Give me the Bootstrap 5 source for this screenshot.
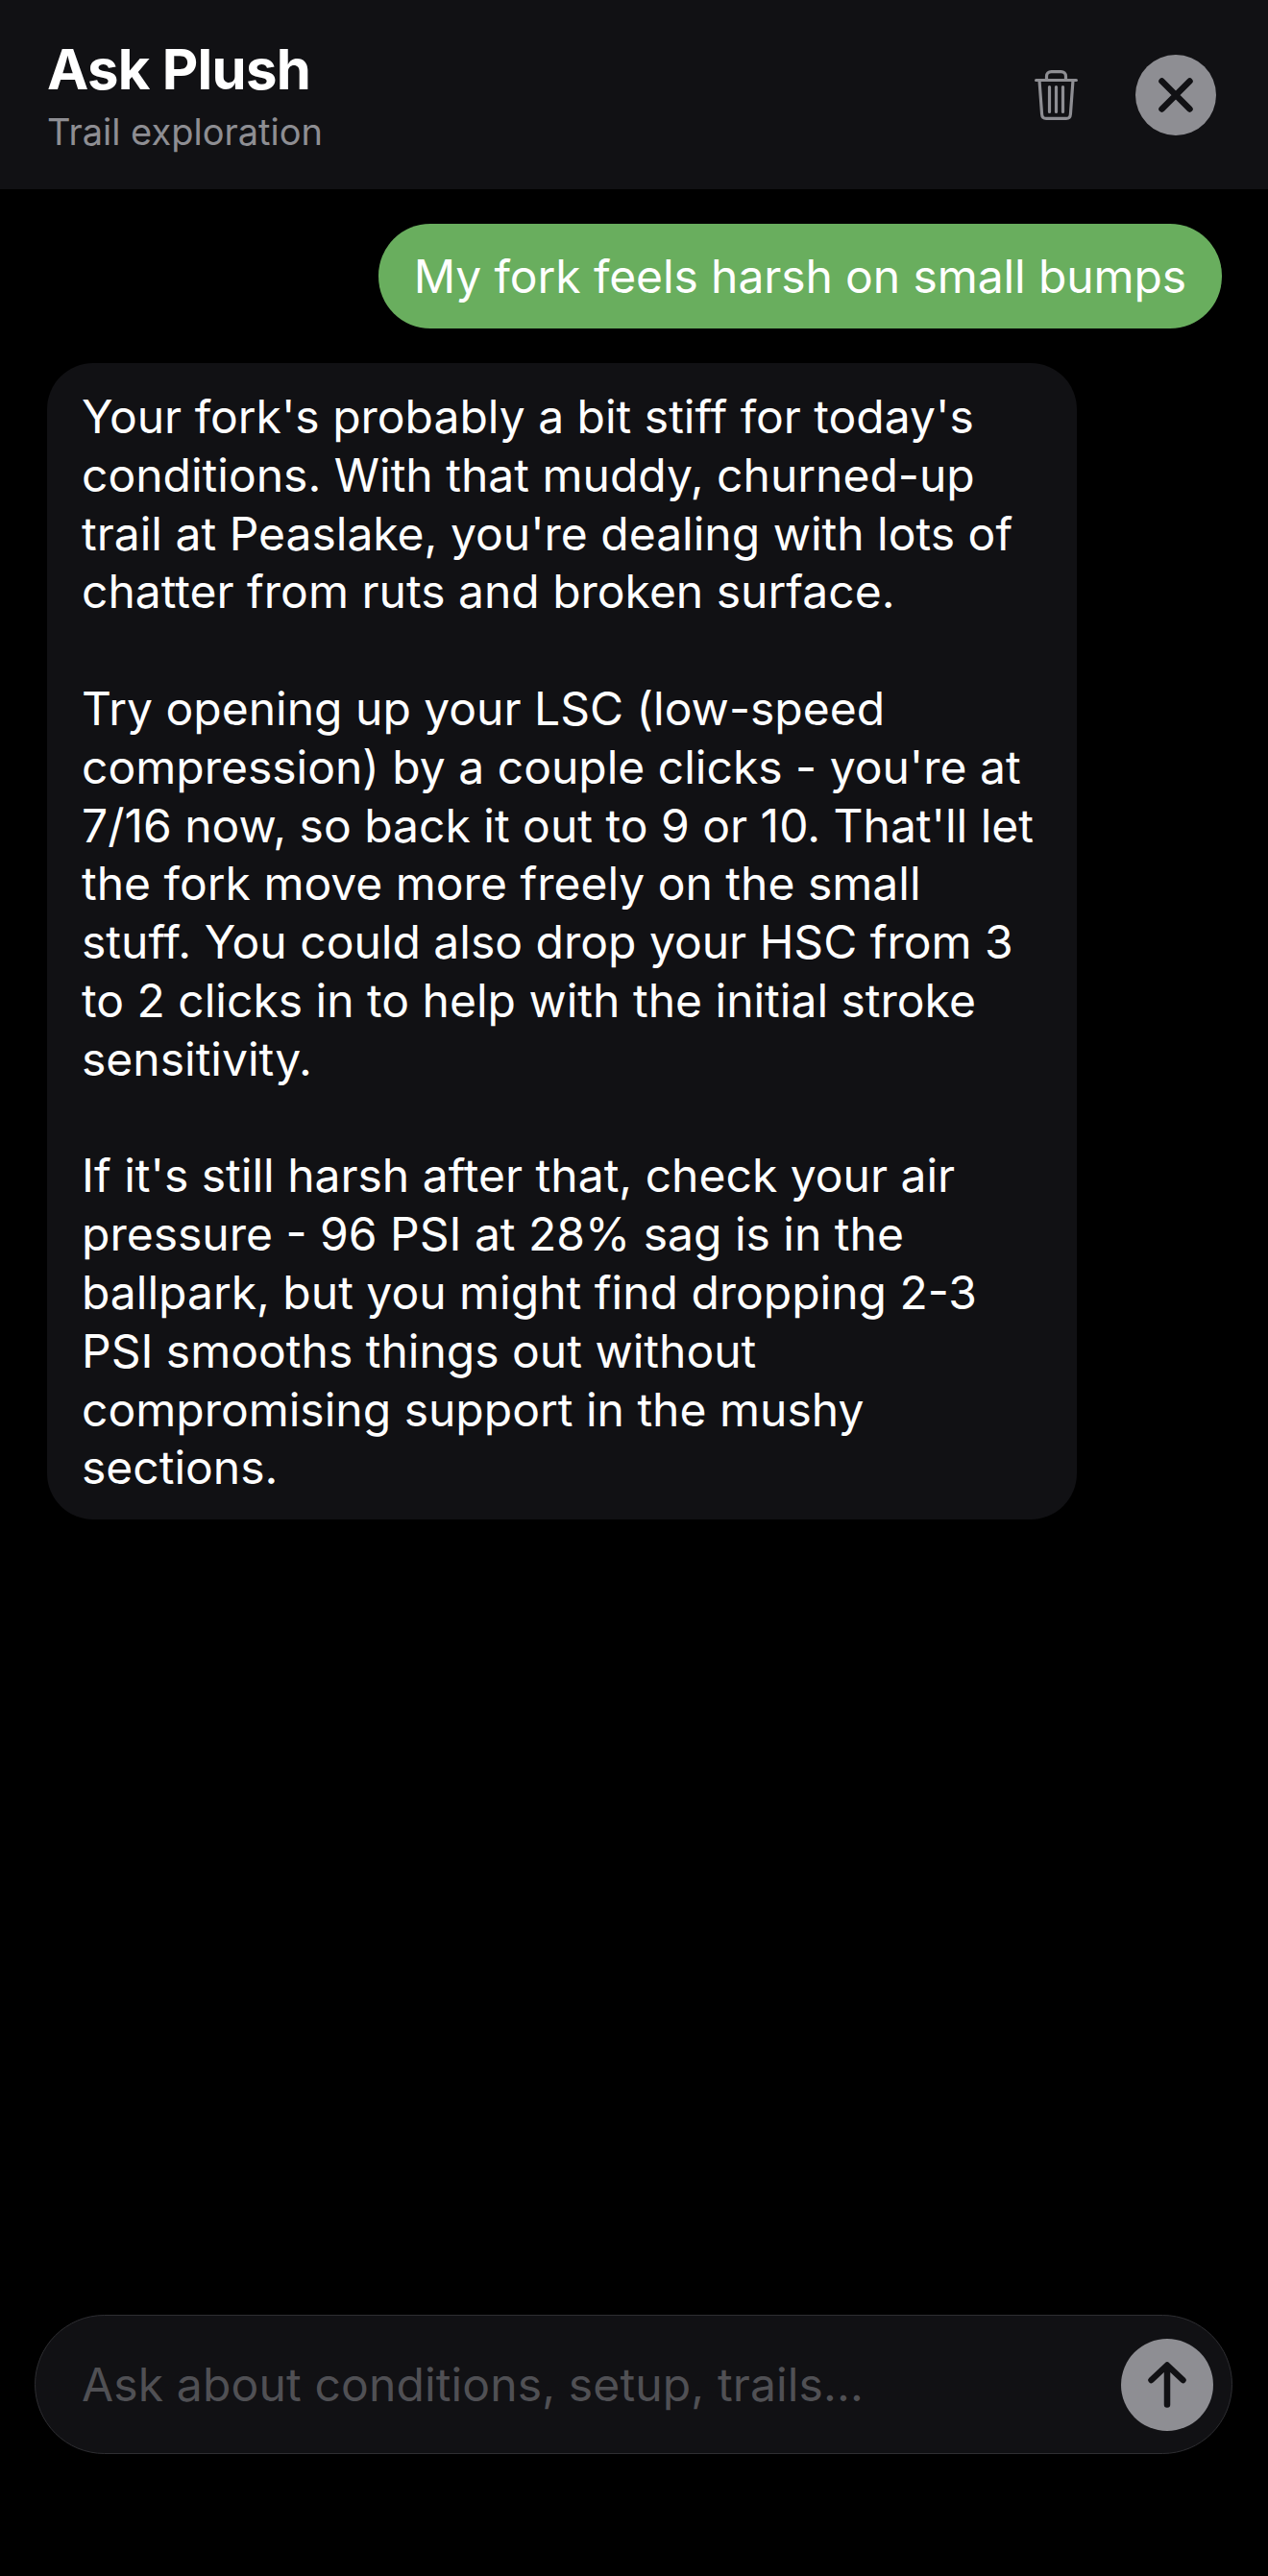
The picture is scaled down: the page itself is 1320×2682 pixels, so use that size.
<!DOCTYPE html>
<html lang="en">
<head>
  <meta charset="UTF-8">
  <title>Ask Plush</title>
  <meta name="viewport" content="width=device-width, initial-scale=1">
  <link href="https://cdn.jsdelivr.net/npm/bootstrap@5.3.3/dist/css/bootstrap.min.css" rel="stylesheet">
  <style>
    body {
      background: #000;
      color: #fff;
      font-family: Inter, "Liberation Sans", sans-serif;
      height: 2682px;
    }
    .chat-header {
      background: #111114;
      height: 197px;
      padding: 0 54px 0 49px;
    }
    .chat-title {
      font-size: 58px;
      font-weight: 700;
      letter-spacing: -0.7px;
      line-height: 70px;
      margin: -1px 0 8px;
    }
    .chat-sub {
      color: #8e8e93;
      font-size: 38px;
      line-height: 44px;
    }
    .trash-btn {
      background: none;
      border: 0;
      padding: 0;
      width: 45px;
      height: 52px;
      margin-right: 60px;
    }
    .close-btn {
      background: #8e8e93;
      border: 0;
      border-radius: 50%;
      padding: 0;
      width: 84px;
      height: 84px;
    }
    .chat-body {
      padding: 36px 48px 0 49px;
      gap: 36px;
    }
    .msg-user {
      background: #69ae5e;
      border-radius: 54px;
      font-size: 48px;
      letter-spacing: -0.1px;
      line-height: 61px;
      padding: 24px 37px;
    }
    .msg-bot {
      background: #111114;
      border-radius: 48px;
      font-size: 48px;
      line-height: 60.8px;
      padding: 26px 36px 23px;
      width: 1072px;
    }
    .msg-bot p {
      margin: 0 0 60.8px;
    }
    .msg-bot p:last-child {
      margin: 0;
    }
    .composer {
      background: #111114;
      border: 1.5px solid #2e2e32;
      border-radius: 73px;
      height: 145px;
      margin: 0 37px 127px 36px;
      padding: 0 19px 0 48px;
    }
    .composer input {
      background: transparent;
      border: 0;
      color: #fff;
      font-size: 48px;
      letter-spacing: 0.14px;
      padding: 0;
      box-shadow: none;
    }
    .composer input::placeholder {
      color: #505054;
      opacity: 1;
    }
    .send-btn {
      background: #8e8e93;
      border: 0;
      border-radius: 50%;
      padding: 0;
      width: 96px;
      height: 96px;
    }
  </style>
</head>
<body class="d-flex flex-column">

  <header class="chat-header d-flex align-items-center justify-content-between flex-shrink-0">
    <div>
      <h1 class="chat-title">Ask Plush</h1>
      <div class="chat-sub">Trail exploration</div>
    </div>
    <div class="d-flex align-items-center">
      <button class="trash-btn d-flex" type="button" aria-label="Clear">
        <svg width="45" height="52" viewBox="0 0 45 52" fill="none" stroke="#8e8e93" stroke-width="3.200" stroke-linecap="round" stroke-linejoin="round">
          <path d="M1.600 10.500h41.800"/>
          <path d="M12.500 10V6.500c0-3 2-4.900 5-4.900h10c3 0 5 1.900 5 4.900V10"/>
          <path d="M5 10.500 7.600 46c.2 2.800 1.800 4.400 4.500 4.400h20.800c2.700 0 4.300-1.600 4.500-4.400L40 10.500"/>
          <path d="M15.500 17.500v26M22.500 17.500v26M29.500 17.500v26"/>
        </svg>
      </button>
      <button class="close-btn d-flex align-items-center justify-content-center" type="button" aria-label="Close">
        <svg width="36" height="36" viewBox="0 0 36 36" fill="none" stroke="#111114" stroke-width="6.500" stroke-linecap="round">
          <path d="M3.500 3.500l29 29M32.500 3.500l-29 29"/>
        </svg>
      </button>
    </div>
  </header>

  <main class="chat-body d-flex flex-column align-items-start flex-grow-1">
    <div class="msg-user align-self-end">My fork feels harsh on small bumps</div>
    <div class="msg-bot">
      <p>Your fork's probably a bit stiff for today's conditions. With that muddy, churned-up trail at Peaslake, you're dealing with lots of chatter from ruts and broken surface.</p>
      <p>Try opening up your LSC (low-speed compression) by a couple clicks - you're at 7/16 now, so back it out to 9 or 10. That'll let the fork move more freely on the small stuff. You could also drop your HSC from 3 to 2 clicks in to help with the initial stroke sensitivity.</p>
      <p>If it's still harsh after that, check your air pressure - 96 PSI at 28% sag is in the ballpark, but you might find dropping 2-3 PSI smooths things out without compromising support in the mushy sections.</p>
    </div>
  </main>

  <div class="composer d-flex align-items-center flex-shrink-0">
    <input class="form-control" type="text" placeholder="Ask about conditions, setup, trails...">
    <button class="send-btn d-flex align-items-center justify-content-center flex-shrink-0" type="button" aria-label="Send">
      <svg width="40" height="48" viewBox="0 0 40 48" fill="none" stroke="#111114" stroke-width="6.500" stroke-linecap="round" stroke-linejoin="round">
        <path d="M20 44.500V4.500M3.500 19 20 3.500 36.500 19"/>
      </svg>
    </button>
  </div>

</body>
</html>
